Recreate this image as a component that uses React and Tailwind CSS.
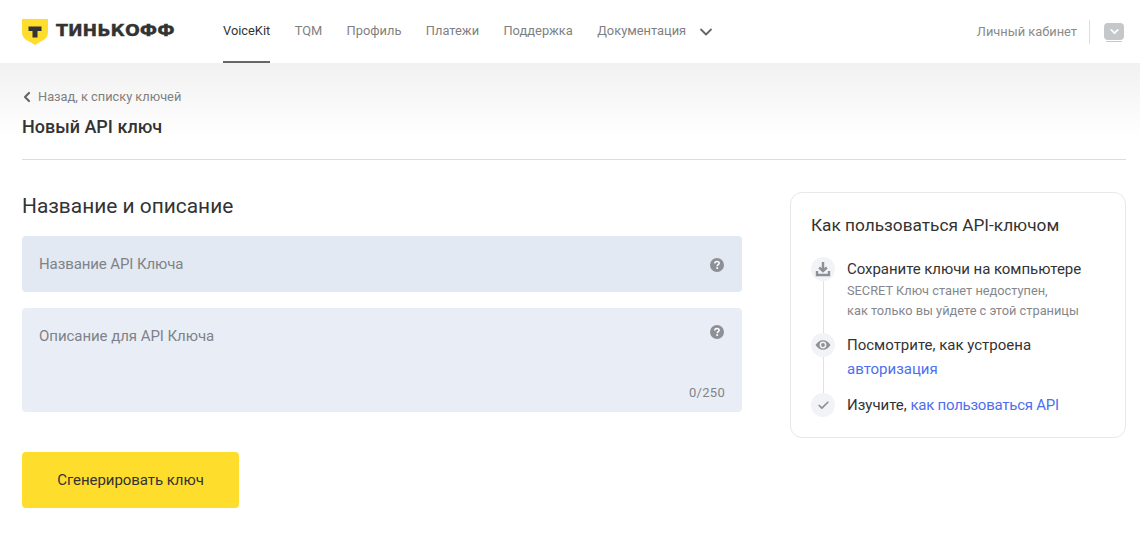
import React from "react";
import { ChevronDown, ChevronLeft, Check } from "lucide-react";

function NavItem({ label, active }) {
  return (
    <a
      className={`h-full flex items-center border-b-2 ${
        active ? "border-[#666] text-[#333]" : "border-transparent text-[#7f7f7f]"
      }`}
    >
      {label}
    </a>
  );
}

function Logo() {
  return (
    <div className="flex items-center gap-[8px]">
      <svg width="26" height="26" viewBox="0 0 26 26">
        <path d="M0 0H26V13C26 19 22 21 18 23L13 26L8 23C4 21 0 19 0 13Z" fill="#ffdd2d" />
        <path d="M6.5 7.5H19.5V12H15.5V18.5H10.5V12H6.5Z" fill="#333" />
      </svg>
      <span className="origin-left scale-x-[1.13] font-['DejaVu_Sans',sans-serif] font-bold text-[15.5px] leading-none text-[#333] [-webkit-text-stroke:0.3px_#333]">
        ТИНЬКОФФ
      </span>
    </div>
  );
}

function HelpIcon({ className }) {
  return (
    <svg width="14" height="14" viewBox="0 0 14 14" className={className}>
      <circle cx="7" cy="7" r="7" fill="#8d9096" />
      <path d="M4.8 5.4C4.8 4.2 5.8 3.5 7 3.5S9.2 4.2 9.2 5.3C9.2 6.6 7.2 6.8 7.2 8.2" fill="none" stroke="#fff" strokeWidth="1.5" />
      <rect x="6.3" y="9.2" width="1.8" height="1.7" fill="#fff" />
    </svg>
  );
}

function Step({ icon, line, children }) {
  return (
    <div className="flex gap-[12px]">
      <div className="flex flex-col items-center w-6 shrink-0">
        <div className="w-6 h-6 rounded-full bg-[#f1f3f6] flex items-center justify-center shrink-0">{icon}</div>
        {line && <div className="w-px flex-1 bg-[#dde1ec]" />}
      </div>
      <div className="flex-1">{children}</div>
    </div>
  );
}

export default function App() {
  return (
    <div className="w-[1140px] h-[542px] overflow-hidden bg-white font-['Roboto',sans-serif] text-[#333]">
      <header className="h-[63px] flex items-center pl-[22px] pr-[16px] text-[12.85px]">
        <div className="w-[201px]">
          <Logo />
        </div>
        <nav className="h-full flex items-center gap-[24.4px]">
          <NavItem label="VoiceKit" active />
          <NavItem label="TQM" />
          <NavItem label="Профиль" />
          <NavItem label="Платежи" />
          <NavItem label="Поддержка" />
          <NavItem label="Документация" />
        </nav>
        <ChevronDown size={20} strokeWidth={2.2} className="ml-[10px] text-[#666]" />
        <div className="ml-auto flex items-center text-[#8a8a8a]">
          <span>Личный кабинет</span>
          <div className="w-px h-6 bg-[#ddd] ml-3 mr-[14px]" />
          <div className="w-5 flex flex-col items-center mt-0.5">
            <div className="w-5 h-[17px] rounded-sm bg-[#c6c7cb] flex items-center justify-center">
              <ChevronDown size={13} strokeWidth={3} className="text-white" />
            </div>
            <div className="w-4 h-px bg-[#c6c7cb] mt-px" />
          </div>
        </div>
      </header>

      <div className="h-[479px] px-[22px] pr-[14px] bg-gradient-to-b from-[#f1f1f1] to-white bg-[length:100%_75px] bg-no-repeat">
        <div className="pt-[26px] flex items-center text-[12.8px] leading-4 text-[#7f7f7f]">
          <ChevronLeft size={16} strokeWidth={3.2} className="-ml-[3px] text-[#666]" />
          <span className="ml-[3px]">Назад, к списку ключей</span>
        </div>
        <h1 className="mt-[10px] text-[18px] leading-[24px] font-medium text-[#333]">Новый API ключ</h1>
        <div className="mt-[20px] h-px bg-[#dcdcdc]" />

        <div className="flex mt-[32px] gap-[48px]">
          <div className="w-[720px] pt-0">
            <h2 className="mt-[1px] text-[20.9px] leading-[26px] text-[#333]">Название и описание</h2>
            <div className="mt-[17px] h-14 rounded bg-[#e3e9f2] flex items-center justify-between pl-[17px] pr-[18px] text-[15px] tracking-[-0.1px] text-[#7f8288]">
              <span>Название API Ключа</span>
              <HelpIcon className="mt-0.5" />
            </div>
            <div className="mt-4 h-[104px] rounded bg-[#e9eef6] flex flex-col pl-[17px] pr-[18px] pt-[18px] pb-[11px] text-[15px] tracking-[-0.05px] text-[#7f8288]">
              <div className="flex justify-between items-start">
                <span className="leading-[20px]">Описание для API Ключа</span>
                <HelpIcon className="-mt-px" />
              </div>
              <div className="mt-auto -mr-px text-right text-[13px] leading-4 text-[#80848a] tracking-[0.3px]">0/250</div>
            </div>
            <button className="mt-10 w-[217px] h-14 rounded bg-[#ffdd2d] text-[15px] tracking-[-0.05px] text-[#333]">Сгенерировать ключ</button>
          </div>

          <aside className="w-[336px] h-[246px] rounded-xl border border-[#e7e8ea] bg-white pl-[20px] pr-4 pt-[20px]">
            <h3 className="text-[17.25px] leading-6 text-[#333]">Как пользоваться API-ключом</h3>
            <div className="mt-[20px] text-[15px] text-[#333]">
              <Step
                line
                icon={
                  <svg width="16" height="16" viewBox="0 0 16 16" fill="none" stroke="#8d9096" strokeWidth="2.4">
                    <path d="M8 1V10M4.2 6.5L8 10L11.8 6.5" />
                    <path d="M2 10V14H14V10" />
                  </svg>
                }
              >
                <div className="leading-6 h-6 tracking-[-0.05px]">Сохраните ключи на компьютере</div>
                <div className="pb-[12px] text-[12.8px] leading-[20px] text-[#85878c]">
                  SECRET Ключ станет недоступен,
                  <br />
                  как только вы уйдете с этой страницы
                </div>
              </Step>
              <Step
                line
                icon={
                  <svg width="16" height="16" viewBox="0 0 16 16">
                    <path d="M0.5 8C2.5 4.8 5 3.2 8 3.2S13.5 4.8 15.5 8C13.5 11.2 11 12.8 8 12.8S2.5 11.2 0.5 8Z" fill="#8d9096" />
                    <circle cx="8" cy="8" r="3.4" fill="#f1f3f6" />
                    <circle cx="8" cy="8" r="1.9" fill="#8d9096" />
                  </svg>
                }
              >
                <div className="leading-6">Посмотрите, как устроена</div>
                <div className="leading-6 pb-[12px] text-[#4d6ff0]">авторизация</div>
              </Step>
              <Step icon={<Check size={13} strokeWidth={3.2} className="text-[#8d9096]" />}>
                <div className="leading-6">
                  Изучите, <span className="text-[#4d6ff0] tracking-[-0.25px]">как пользоваться API</span>
                </div>
              </Step>
            </div>
          </aside>
        </div>
      </div>
    </div>
  );
}
